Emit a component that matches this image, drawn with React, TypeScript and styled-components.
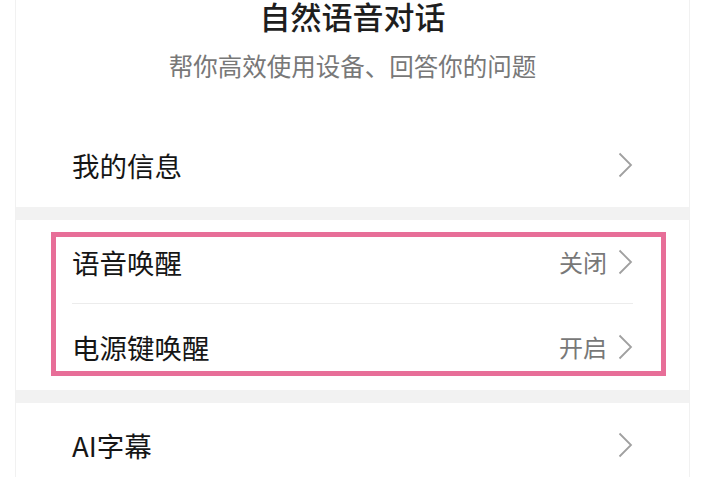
import styled, { createGlobalStyle } from "styled-components";

const GlobalStyle = createGlobalStyle`
  html, body {
    margin: 0;
    padding: 0;
    background: #ffffff;
    font-family: "Noto Sans CJK SC", "Noto Sans", sans-serif;
  }
`;

const Page = styled.div`
  padding: 0 15px;
  height: 477px;
  overflow: hidden;
`;

const Panel = styled.div`
  display: flex;
  flex-direction: column;
  border-left: 1px solid #f1f1f1;
  border-right: 1px solid #f1f1f1;
  min-height: 477px;
  background: #fff;
`;

const Header = styled.div`
  display: flex;
  flex-direction: column;
  align-items: center;
  padding-top: 1px;
  padding-bottom: 45px;
`;

const Title = styled.h1`
  margin: 0;
  font-size: 31px;
  line-height: 30px;
  font-weight: 500;
  color: #1e1e1e;
`;

const Subtitle = styled.p`
  margin: 23px 0 0;
  font-size: 24.5px;
  line-height: 24px;
  color: #787878;
`;

const Band = styled.div`
  height: 13px;
  background: #f2f2f2;
`;

const Group = styled.div`
  position: relative;
  display: flex;
  flex-direction: column;
`;

const Row = styled.div<{ $height?: number }>`
  display: flex;
  align-items: center;
  justify-content: space-between;
  height: ${(p) => p.$height ?? 84}px;
  padding: 0 56px;
`;

const Label = styled.span`
  font-size: 27.5px;
  line-height: 28px;
  color: #161616;
`;

const Right = styled.div`
  display: flex;
  align-items: center;
  gap: 10px;
`;

const Value = styled.span`
  font-size: 24px;
  line-height: 24px;
  color: #787878;
`;

const Divider = styled.div`
  height: 1px;
  margin: 0 56px;
  background: #ececec;
`;

const Highlight = styled.div`
  position: absolute;
  top: 12px;
  left: 35px;
  right: 23px;
  bottom: 14px;
  border: 5px solid #e76e98;
  pointer-events: none;
`;

function Chevron() {
  return (
    <svg width="16" height="26" viewBox="0 0 16 26">
      <path
        d="M2.5 1.5 L14 13 L2.5 24.5"
        fill="none"
        stroke="#a0a0a0"
        strokeWidth="1.8"
      />
    </svg>
  );
}

export default function App() {
  return (
    <>
      <GlobalStyle />
      <Page>
        <Panel>
          <Header>
            <Title>自然语音对话</Title>
            <Subtitle>帮你高效使用设备、回答你的问题</Subtitle>
          </Header>
          <Row>
            <Label>我的信息</Label>
            <Chevron />
          </Row>
          <Band />
          <Group>
            <Row $height={83}>
              <Label>语音唤醒</Label>
              <Right>
                <Value>关闭</Value>
                <Chevron />
              </Right>
            </Row>
            <Divider />
            <Row $height={86}>
              <Label>电源键唤醒</Label>
              <Right>
                <Value>开启</Value>
                <Chevron />
              </Right>
            </Row>
            <Highlight />
          </Group>
          <Band />
          <Row>
            <Label>AI字幕</Label>
            <Chevron />
          </Row>
        </Panel>
      </Page>
    </>
  );
}
